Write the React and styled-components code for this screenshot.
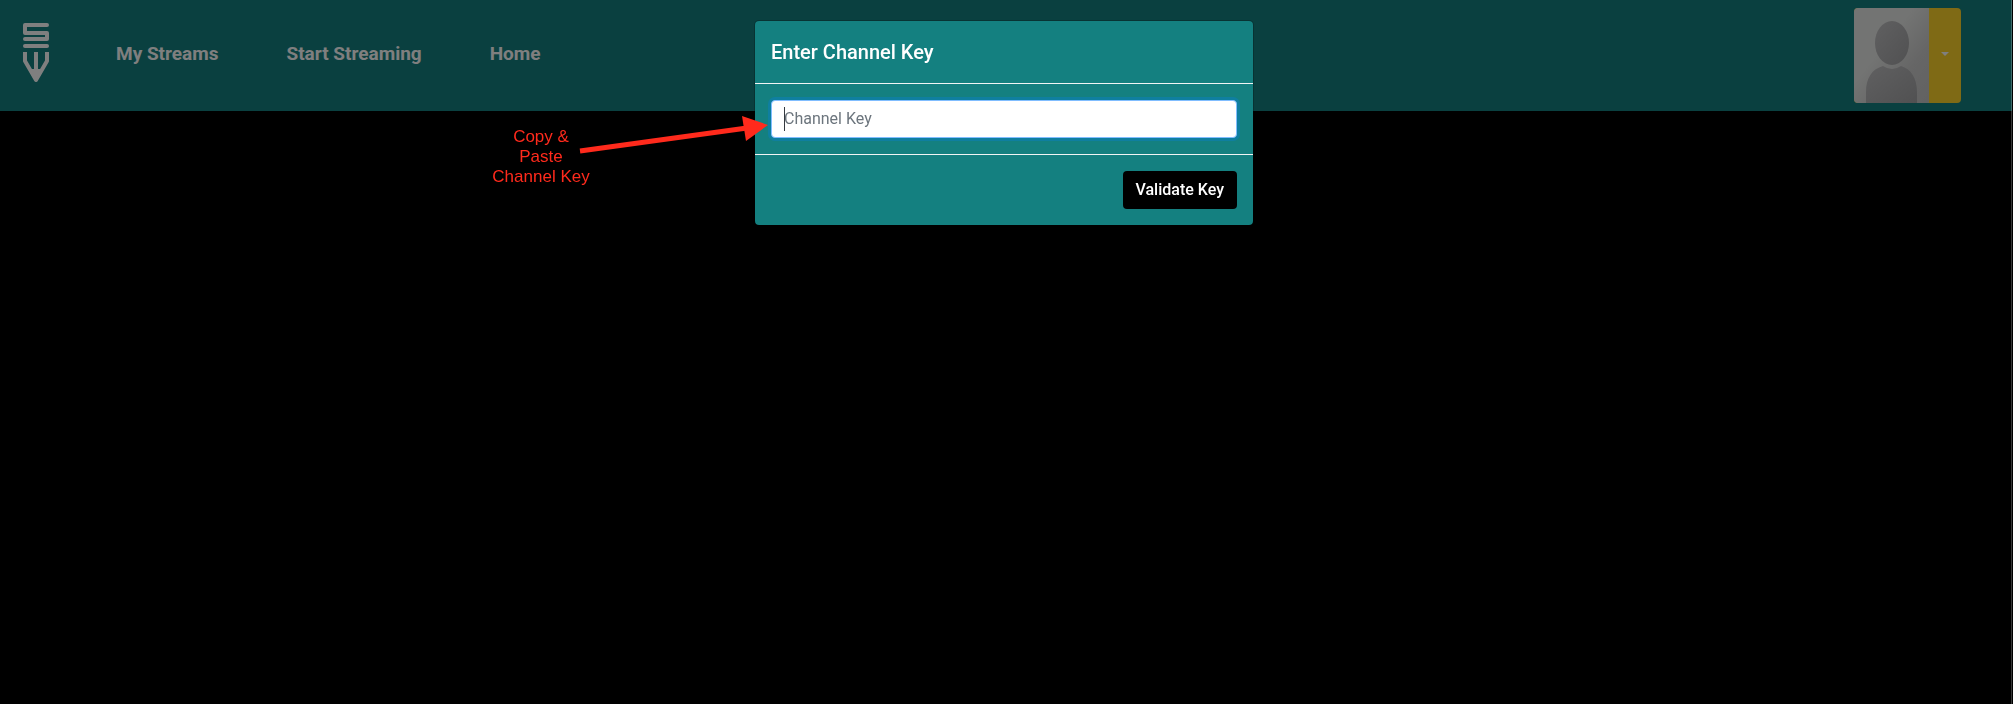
import React from "react";
import styled, { createGlobalStyle } from "styled-components";

const GlobalStyle = createGlobalStyle`
  *, *::before, *::after { box-sizing: border-box; }
  body {
    margin: 0;
    background: #000;
    font-family: Roboto, "Liberation Sans", sans-serif;
    font-size: 16px;
    line-height: 24px;
  }
`;

const Page = styled.div`
  min-height: 100vh;
  margin-right: 1px;
`;

const NavBar = styled.header`
  display: flex;
  align-items: center;
  padding: 8px 51px 8px 22px;
  background: #148080;
`;

const Brand = styled.a`
  display: flex;
  margin-right: 32px;
  padding-bottom: 6px;
  color: #fff;
`;

const NavLinks = styled.nav`
  display: flex;
  margin-right: auto;
  padding-bottom: 4px;
`;

const NavLink = styled.a`
  padding: 0 34px;
  color: #fff;
  font-size: 19px;
  font-weight: 700;
  text-decoration: none;
`;

const AccountButton = styled.button`
  display: flex;
  align-items: center;
  height: 95px;
  padding: 0;
  border: 0;
  border-radius: 4px;
  overflow: hidden;
  background: #ffd42a;
`;

const CaretBox = styled.span`
  display: flex;
  justify-content: center;
  width: 32px;
  padding-bottom: 4px;
`;

const Caret = styled.span`
  border: 4px solid transparent;
  border-top-color: #fff;
  border-bottom: 0;
`;

const Backdrop = styled.div`
  position: fixed;
  inset: 0 1px 0 0;
  display: flex;
  justify-content: center;
  align-items: flex-start;
  padding: 20px 3px 20px 0;
  border-right: 1px solid rgba(255, 255, 255, 0.22);
  background: rgba(0, 0, 0, 0.5);
`;

const Dialog = styled.form`
  position: relative;
  width: 500px;
  border: 1px solid rgba(0, 0, 0, 0.2);
  border-radius: 5px;
  background: #148080;
  background-clip: padding-box;
  color: #fff;
`;

const DialogHeader = styled.div`
  padding: 16px;
  border-bottom: 1px solid #f1f5f5;
`;

const DialogTitle = styled.label`
  display: block;
  font-size: 20px;
  font-weight: 500;
  line-height: 30px;
`;

const DialogBody = styled.div`
  padding: 16px;
`;

const Field = styled.div`
  position: relative;
`;

const TextInput = styled.input`
  display: block;
  width: 100%;
  height: 38px;
  padding: 5px 12px 7px;
  border: 1px solid #80bdff;
  border-radius: 4px;
  outline: 0;
  background: #fff;
  box-shadow: 0 0 0 3px rgba(0, 123, 255, 0.25);
  color: #495057;
  caret-color: transparent;
  font: inherit;
  &::placeholder { color: #6c757d; opacity: 1; }
`;

const TextCursor = styled.span`
  position: absolute;
  top: 7px;
  left: 13px;
  width: 1px;
  height: 24px;
  background: #343a40;
`;

const DialogFooter = styled.div`
  display: flex;
  justify-content: flex-end;
  padding: 16px;
  border-top: 1px solid #f1f5f5;
`;

const PrimaryButton = styled.button`
  height: 38px;
  padding: 0 13px;
  border: 0;
  border-radius: 4px;
  background: #000;
  color: #fff;
  font: inherit;
  font-weight: 500;
`;

const Callout = styled.div`
  position: absolute;
  top: 94px;
  right: calc(100% - 14px);
  display: flex;
  align-items: flex-start;
`;

const CalloutText = styled.p`
  width: 100px;
  margin: 12px 0 0;
  color: #ff2a1c;
  font-family: "Liberation Sans", sans-serif;
  font-size: 17px;
  line-height: 20px;
  text-align: center;
`;

const CalloutArrow = styled.svg`
  margin-left: -12px;
`;

function Logo() {
  return (
    <svg width="28" height="62" viewBox="0 0 28 62" fill="none" stroke="currentColor" strokeWidth="4" strokeLinejoin="round" strokeLinecap="round" aria-hidden="true">
      <path d="M25 3H3V11H25V17H3" />
      <path d="M3 24H25" />
      <path d="M3 30V39L14 58L25 39V30" strokeLinecap="butt" />
      <path d="M14 30V57" strokeLinecap="butt" />
      <path d="M9 47L14 59L19 47Z" fill="currentColor" stroke="none" />
    </svg>
  );
}

function Avatar() {
  return (
    <svg width="75" height="95" viewBox="0 0 75 95" aria-hidden="true">
      <defs>
        <linearGradient id="paper" x1="0" y1="0" x2="1" y2="1">
          <stop offset="0.4" stopColor="#e6e8e6" />
          <stop offset="0.7" stopColor="#cccccc" />
          <stop offset="1" stopColor="#c4c4c4" />
        </linearGradient>
        <linearGradient id="figure" x1="0" y1="0" x2="1" y2="1">
          <stop offset="0" stopColor="#c0c0c2" />
          <stop offset="1" stopColor="#a2a2a4" />
        </linearGradient>
      </defs>
      <rect width="75" height="95" fill="url(#paper)" />
      <ellipse cx="38" cy="35" rx="17" ry="22" fill="url(#figure)" />
      <path d="M12 95V84C12 70 18 61 29 58Q38 64 47 58C57 61 63 70 63 84V95Z" fill="url(#figure)" />
    </svg>
  );
}

export default function App() {
  return (
    <>
      <GlobalStyle />
      <Page>
        <NavBar>
          <Brand href="#" aria-label="Dashboard"><Logo /></Brand>
          <NavLinks>
            <NavLink href="#streams">My Streams</NavLink>
            <NavLink href="#start">Start Streaming</NavLink>
            <NavLink href="#home">Home</NavLink>
          </NavLinks>
          <AccountButton type="button" aria-label="Account menu">
            <Avatar />
            <CaretBox><Caret /></CaretBox>
          </AccountButton>
        </NavBar>
      </Page>
      <Backdrop>
        <Dialog onSubmit={(e) => e.preventDefault()}>
          <DialogHeader>
            <DialogTitle htmlFor="channel-key">Enter Channel Key</DialogTitle>
          </DialogHeader>
          <DialogBody>
            <Field>
              <TextInput id="channel-key" type="text" placeholder="Channel Key" />
              <TextCursor />
            </Field>
          </DialogBody>
          <DialogFooter>
            <PrimaryButton type="submit">Validate Key</PrimaryButton>
          </DialogFooter>
          <Callout>
            <CalloutText>Copy &amp;<br />Paste<br />Channel Key</CalloutText>
            <CalloutArrow width="190" height="40" viewBox="0 0 190 40" aria-hidden="true">
              <path d="M1 36L168 13" stroke="#ff2a1c" strokeWidth="5" />
              <path d="M163 1L189 10L167 26Z" fill="#ff2a1c" />
            </CalloutArrow>
          </Callout>
        </Dialog>
      </Backdrop>
    </>
  );
}
